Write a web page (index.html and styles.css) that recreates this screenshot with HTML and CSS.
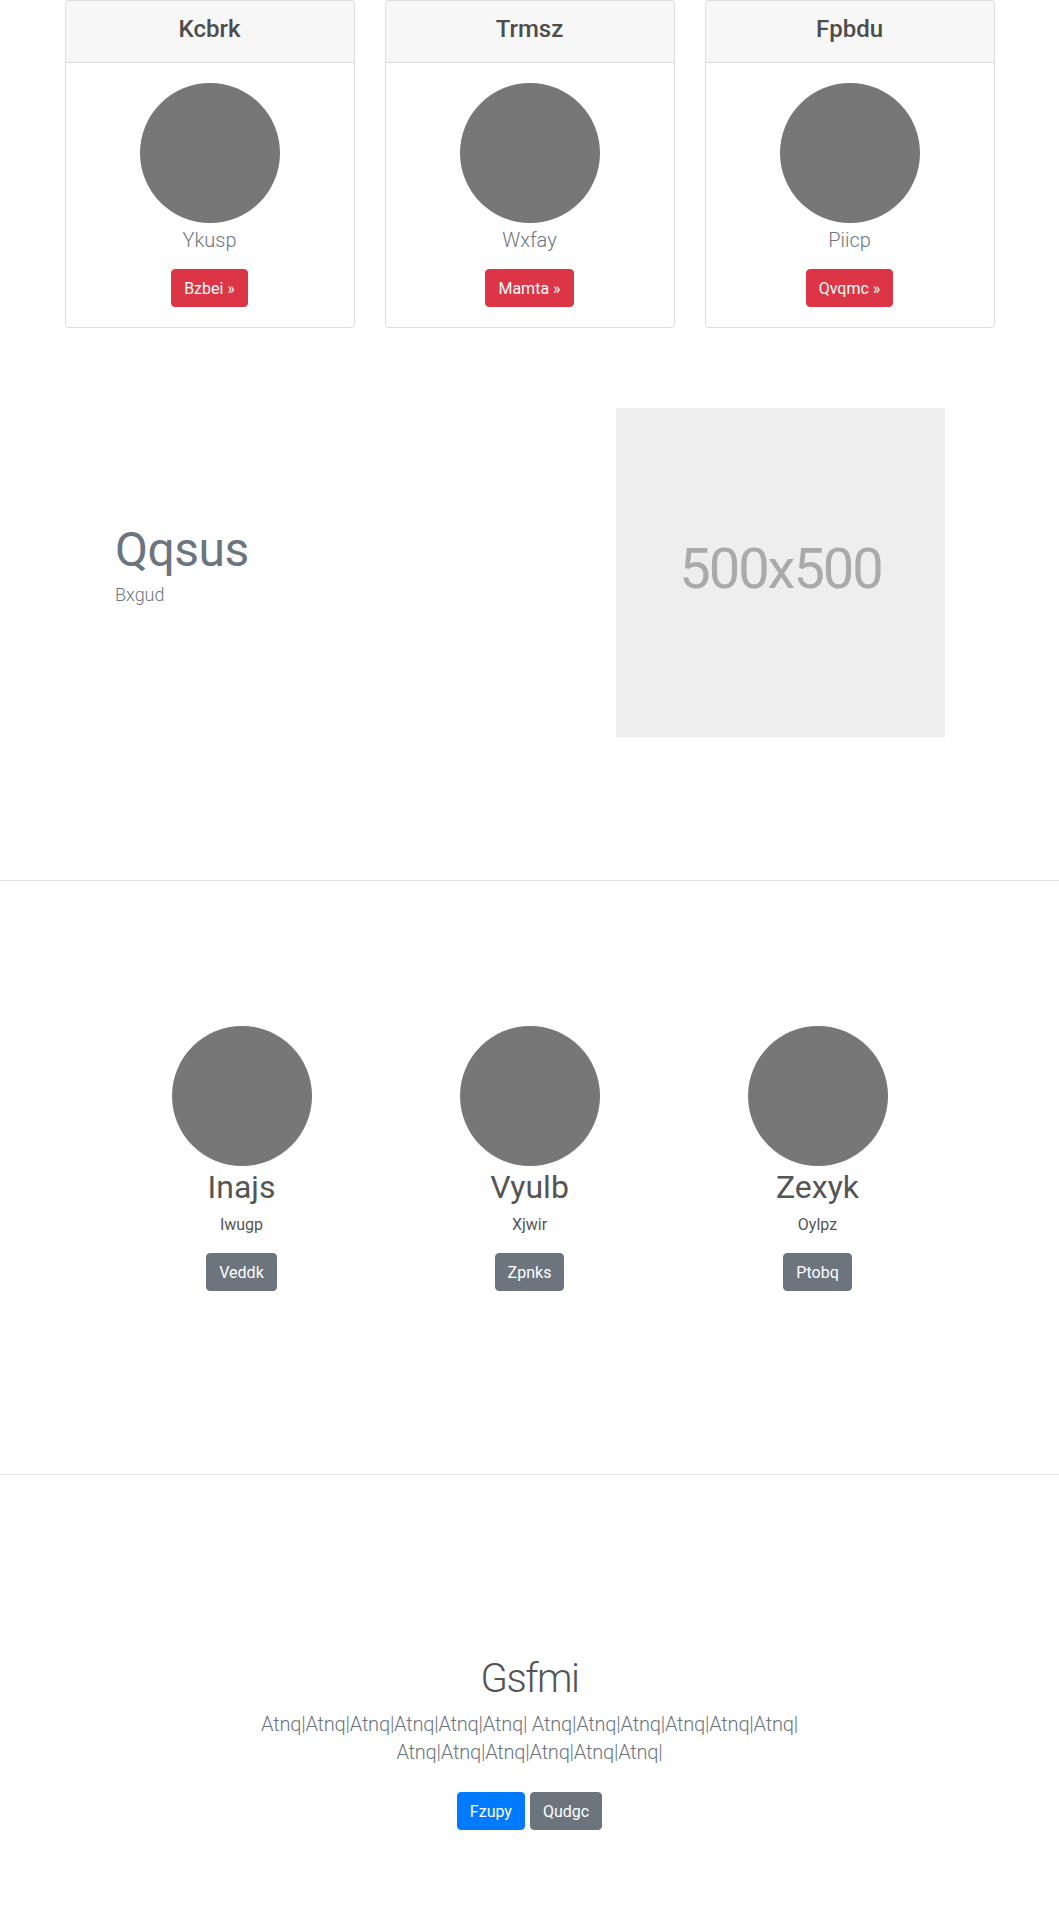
FILE: index.html
```html
<!DOCTYPE html>
<html lang="en">
<head>
<meta charset="utf-8">
<title>Page</title>
<link rel="stylesheet" href="styles.css">
</head>
<body>
<section class="pricing">
  <div class="container">
    <div class="card-row">
      <div class="card">
        <div class="card-header"><h4 class="card-title">Kcbrk</h4></div>
        <div class="card-body">
          <span class="avatar"></span>
          <p class="lead muted">Ykusp</p>
          <a class="btn btn-danger" href="#">Bzbei &raquo;</a>
        </div>
      </div>
      <div class="card">
        <div class="card-header"><h4 class="card-title">Trmsz</h4></div>
        <div class="card-body">
          <span class="avatar"></span>
          <p class="lead muted">Wxfay</p>
          <a class="btn btn-danger" href="#">Mamta &raquo;</a>
        </div>
      </div>
      <div class="card">
        <div class="card-header"><h4 class="card-title">Fpbdu</h4></div>
        <div class="card-body">
          <span class="avatar"></span>
          <p class="lead muted">Piicp</p>
          <a class="btn btn-danger" href="#">Qvqmc &raquo;</a>
        </div>
      </div>
    </div>
  </div>
</section>

<section class="hero">
  <div class="container hero-grid">
    <div class="hero-text">
      <h1 class="hero-title">Qqsus</h1>
      <p class="hero-sub">Bxgud</p>
    </div>
    <div class="placeholder">500x500</div>
  </div>
</section>

<hr class="divider">

<section class="team">
  <div class="team-grid">
    <div class="member">
      <span class="avatar"></span>
      <h2 class="member-name">Inajs</h2>
      <p class="member-role">Iwugp</p>
      <a class="btn btn-secondary" href="#">Veddk</a>
    </div>
    <div class="member">
      <span class="avatar"></span>
      <h2 class="member-name">Vyulb</h2>
      <p class="member-role">Xjwir</p>
      <a class="btn btn-secondary" href="#">Zpnks</a>
    </div>
    <div class="member">
      <span class="avatar"></span>
      <h2 class="member-name">Zexyk</h2>
      <p class="member-role">Oylpz</p>
      <a class="btn btn-secondary" href="#">Ptobq</a>
    </div>
  </div>
</section>

<hr class="divider">

<section class="cta">
  <h1 class="cta-title">Gsfmi</h1>
  <p class="cta-lead">Atnq|Atnq|Atnq|Atnq|Atnq|Atnq| Atnq|Atnq|Atnq|Atnq|Atnq|Atnq| Atnq|Atnq|Atnq|Atnq|Atnq|Atnq|</p>
  <div class="cta-actions">
    <a class="btn btn-primary" href="#">Fzupy</a>
    <a class="btn btn-secondary" href="#">Qudgc</a>
  </div>
</section>
</body>
</html>
```

FILE: styles.css
```css
* {
  box-sizing: border-box;
}

html, body {
  margin: 0;
  padding: 0;
}

body {
  font-family: Roboto, "Liberation Sans", Arial, sans-serif;
  font-size: 16px;
  line-height: 1.5;
  color: #555;
  background: #fff;
  height: 1920px;
}

.container {
  width: 960px;
  margin: 0 auto;
  padding: 0 15px;
}

/* ---------- pricing cards ---------- */
.card-row {
  display: grid;
  grid-template-columns: repeat(3, 1fr);
  gap: 30px;
}

.card {
  border: 1px solid rgba(0, 0, 0, 0.125);
  border-radius: 4px;
  overflow: hidden;
  background: #fff;
}

.card-header {
  padding: 14px 20px 10px;
  background: rgba(0, 0, 0, 0.03);
  border-bottom: 1px solid rgba(0, 0, 0, 0.125);
  text-align: center;
}

.card-title {
  margin: 0 0 8px;
  font-size: 24px;
  line-height: 1.2;
  font-weight: 500;
  color: #4d4d4d;
}

.card-body {
  padding: 20px;
  text-align: center;
}

.avatar {
  display: block;
  width: 140px;
  height: 140px;
  margin: 0 auto;
  border-radius: 50%;
  background: #777;
}

.lead {
  font-size: 20px;
  font-weight: 300;
  line-height: 1.5;
  padding-top: 2px;
  margin: 0 0 14px;
}

.muted {
  color: #6c757d;
}

/* ---------- buttons ---------- */
.btn {
  display: inline-block;
  padding: 7px 12px 5px;
  font-size: 16px;
  line-height: 24px;
  font-weight: 400;
  border: 1px solid transparent;
  border-radius: 4px;
  color: #fff;
  text-decoration: none;
  text-align: center;
  white-space: nowrap;
}

.btn-danger {
  background: #dc3545;
  border-color: #dc3545;
}

.btn-secondary {
  background: #6c757d;
  border-color: #6c757d;
}

.btn-primary {
  background: #007bff;
  border-color: #007bff;
}

/* ---------- hero ---------- */
.hero {
  padding: 80px 0 143px;
}

.hero-grid {
  display: grid;
  grid-template-columns: 1fr 329px;
  align-items: center;
  padding: 0 64.5px 0 65.5px;
}

.hero-title {
  margin: 0 0 2px;
  font-size: 48px;
  line-height: 1.2;
  font-weight: 400;
  letter-spacing: -0.5px;
  color: #6c757d;
}

.hero-sub {
  margin: 0 0 16px;
  font-size: 18px;
  line-height: 1.5;
  font-weight: 300;
  color: #6c757d;
}

.placeholder {
  width: 329px;
  height: 329px;
  background: #eee;
  color: #aaa;
  display: flex;
  align-items: center;
  justify-content: center;
  font-size: 56px;
  letter-spacing: -2px;
  padding-bottom: 6px;
}

.divider {
  margin: 0;
  border: 0;
  border-top: 1px solid rgba(0, 0, 0, 0.1);
  height: 0;
}

/* ---------- team ---------- */
.team {
  padding: 145px 0 183px;
}

.team-grid {
  display: grid;
  grid-template-columns: repeat(3, 288px);
  justify-content: center;
}

.member {
  text-align: center;
}

.member-name {
  margin: 2px 0 7px;
  font-size: 32px;
  line-height: 1.2;
  font-weight: 400;
  color: #555;
}

.member-role {
  margin: 0 0 16px;
  font-size: 16px;
  line-height: 24px;
  color: #555;
}

/* ---------- call to action ---------- */
.cta {
  padding-top: 180px;
  text-align: center;
}

.cta-title {
  margin: 0 0 7px;
  font-size: 40px;
  line-height: 1.2;
  font-weight: 300;
  letter-spacing: -1.5px;
  color: #555;
}

.cta-lead {
  width: 610px;
  margin: 0 auto 26px;
  font-size: 20px;
  line-height: 28px;
  font-weight: 300;
  letter-spacing: -0.2px;
  color: #6c757d;
}

.cta-actions {
  display: flex;
  justify-content: center;
  gap: 5px;
}
```
